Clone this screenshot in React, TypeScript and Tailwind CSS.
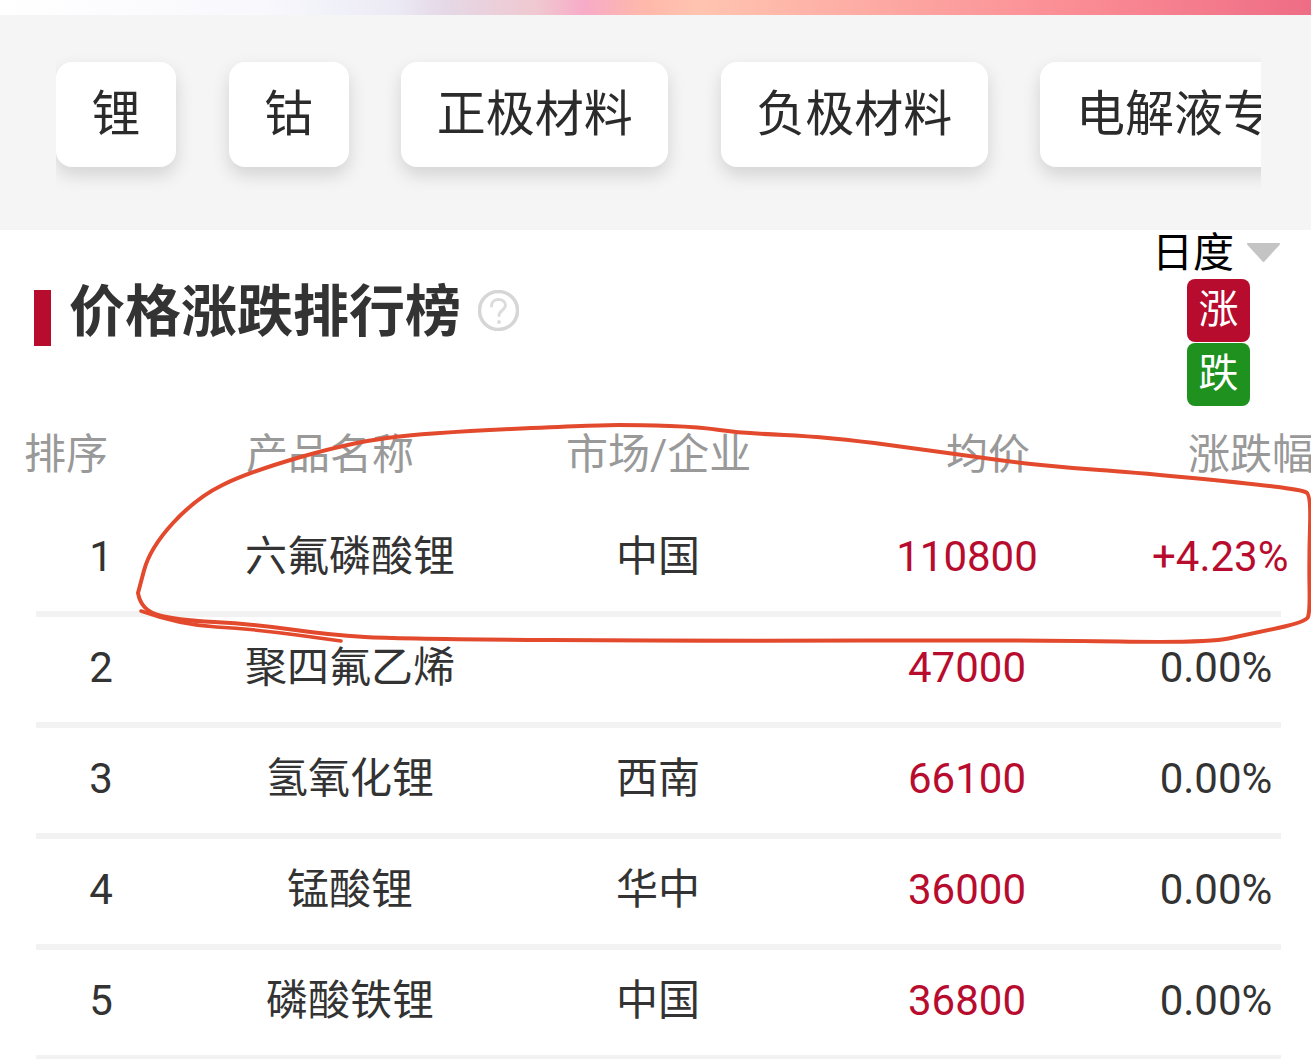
const tabs = ['锂', '钴', '正极材料', '负极材料', '电解液专'];

const rows = [
  { rank: 1, name: '六氟磷酸锂', market: '中国', price: '110800', change: '+4.23%', up: true },
  { rank: 2, name: '聚四氟乙烯', market: '', price: '47000', change: '0.00%', up: false },
  { rank: 3, name: '氢氧化锂', market: '西南', price: '66100', change: '0.00%', up: false },
  { rank: 4, name: '锰酸锂', market: '华中', price: '36000', change: '0.00%', up: false },
  { rank: 5, name: '磷酸铁锂', market: '中国', price: '36800', change: '0.00%', up: false },
];

// hand drawn loop around the first row
const loop: [number, number][] = [
  [138, 593], [141, 610], [175, 620], [253, 624], [330, 635], [400, 639], [700, 641], [1031, 640], [1207, 643],
  [1250, 634], [1306, 622], [1310, 612], [1309, 560], [1311, 495], [1302, 490], [1245, 483], [1129, 472], [1070, 468],
  [1012, 462], [949, 453], [829, 437], [739, 433], [700, 427], [640, 425], [597, 425], [425, 433], [349, 443],
  [249, 472], [196, 498], [150, 548], [138, 593],
];
const tail: [number, number][] = [[141, 611], [180, 625], [253, 629], [341, 641]];

function smooth(points: [number, number][]) {
  let d = `M${points[0][0]} ${points[0][1]}`;
  for (let i = 1; i < points.length - 1; i++) {
    const mx = (points[i][0] + points[i + 1][0]) / 2;
    const my = (points[i][1] + points[i + 1][1]) / 2;
    d += ` Q${points[i][0]} ${points[i][1]} ${mx} ${my}`;
  }
  const last = points[points.length - 1];
  return `${d} L${last[0]} ${last[1]}`;
}

export default function App() {
  return (
    <div className="relative w-full h-[1059px] overflow-hidden bg-white text-[#333] font-['Roboto','Noto_Sans_CJK_SC',sans-serif]">
      {/* Top strip */}
      <div className="h-[15px] bg-[linear-gradient(90deg,#ffffff_0%,#f8f8fd_20%,#ecebf5_30%,#e5d8e6_34%,#f0c8d0_41%,#f7abc8_44.6%,#ffb8ab_49%,#ffc4b0_53.4%,#fb8d95_81.6%,#ee6d85_100%)]" />

      {/* Category tabs */}
      <div className="h-[215px] bg-[#f5f5f5]">
        <div className="ml-[56px] w-[1205px] h-[182px] pt-[47px] flex gap-[52.6px] overflow-hidden">
          {tabs.map((tab) => (
            <div
              key={tab}
              className="shrink-0 h-[105px] px-[35.5px] flex items-center rounded-[16px] bg-white text-[#2b2b2b] text-[49px] leading-none whitespace-nowrap shadow-[0_8px_18px_rgba(0,0,0,0.14)]"
            >
              {tab}
            </div>
          ))}
        </div>
      </div>

      {/* Title */}
      <div className="pl-[34px] pr-[30px] pt-[2px] flex items-center justify-between">
        <div className="flex items-center">
          <div className="w-[17px] h-[56px] mb-[2px] bg-[#b80c2f]" />
          <h2 className="ml-[18px] mb-[14px] text-[56px] leading-none font-bold">价格涨跌排行榜</h2>
          <svg className="ml-[17px] mb-[18px]" width="41" height="41" viewBox="0 0 41 41" fill="none">
            <circle cx="20.5" cy="20.5" r="19" stroke="#d6d6d6" strokeWidth="3.500" />
            <path d="M13.5 16c0-4 3-6.500 7-6.500s7 2.500 7 6c0 4.500-6.500 5-6.500 10" stroke="#dcdcdc" strokeWidth="3" strokeLinecap="round" />
            <circle cx="21" cy="32" r="2" fill="#dcdcdc" />
          </svg>
        </div>
        <div className="flex flex-col items-end">
          <div className="h-[47px] pb-[4px] flex items-center text-[41px] leading-none text-black">
            日度
            <svg className="ml-[12px] mb-[2px]" width="35" height="21" viewBox="0 0 35 21">
              <polygon points="2,2 33,2 17.500,19" fill="#c4c4c4" stroke="#c4c4c4" strokeWidth="2" strokeLinejoin="round" />
            </svg>
          </div>
          <div className="mr-[31px] pb-[2px] w-[63px] h-[63px] flex items-center justify-center rounded-[8px] bg-[#b80c2f] text-white text-[40px] leading-none">
            涨
          </div>
          <div className="mt-px mr-[31px] pb-[2px] w-[63px] h-[63px] flex items-center justify-center rounded-[8px] bg-[#1f911f] text-white text-[40px] leading-none">
            跌
          </div>
        </div>
      </div>

      {/* Table header */}
      <div className="mt-[19px] mb-[21px] h-[60px] pl-[24px] grid grid-cols-[222px_320px_380px_242px_1fr] items-center text-[42px] leading-none text-[#999] whitespace-nowrap overflow-hidden">
        <div>排序</div>
        <div>产品名称</div>
        <div>市场/企业</div>
        <div>均价</div>
        <div>涨跌幅</div>
      </div>

      {/* Rows */}
      {rows.map((row) => (
        <div key={row.rank} className="pl-[36px]">
          <div className="h-[105px] pb-[4px] grid grid-cols-[130px_368px_248px_370px_134px] items-center text-center text-[42px] leading-none whitespace-nowrap">
            <div>{row.rank}</div>
            <div>{row.name}</div>
            <div>{row.market}</div>
            <div className="text-[#b80c2f]">{row.price}</div>
            <div className={row.up ? 'text-[#b80c2f]' : 'pr-[6px]'}>{row.change}</div>
          </div>
          <div className="w-[1245px] h-[6px] bg-[#f2f2f2]" />
        </div>
      ))}

      {/* Pen annotation drawn over the screenshot */}
      <svg className="absolute inset-0 pointer-events-none" width="1311" height="1059" viewBox="0 0 1311 1059" fill="none">
        <path d={smooth(loop)} stroke="#e2492d" strokeWidth="4" strokeLinecap="round" strokeLinejoin="round" />
        <path d={smooth(tail)} stroke="#e2492d" strokeWidth="3.500" strokeLinecap="round" strokeLinejoin="round" />
      </svg>
    </div>
  );
}
